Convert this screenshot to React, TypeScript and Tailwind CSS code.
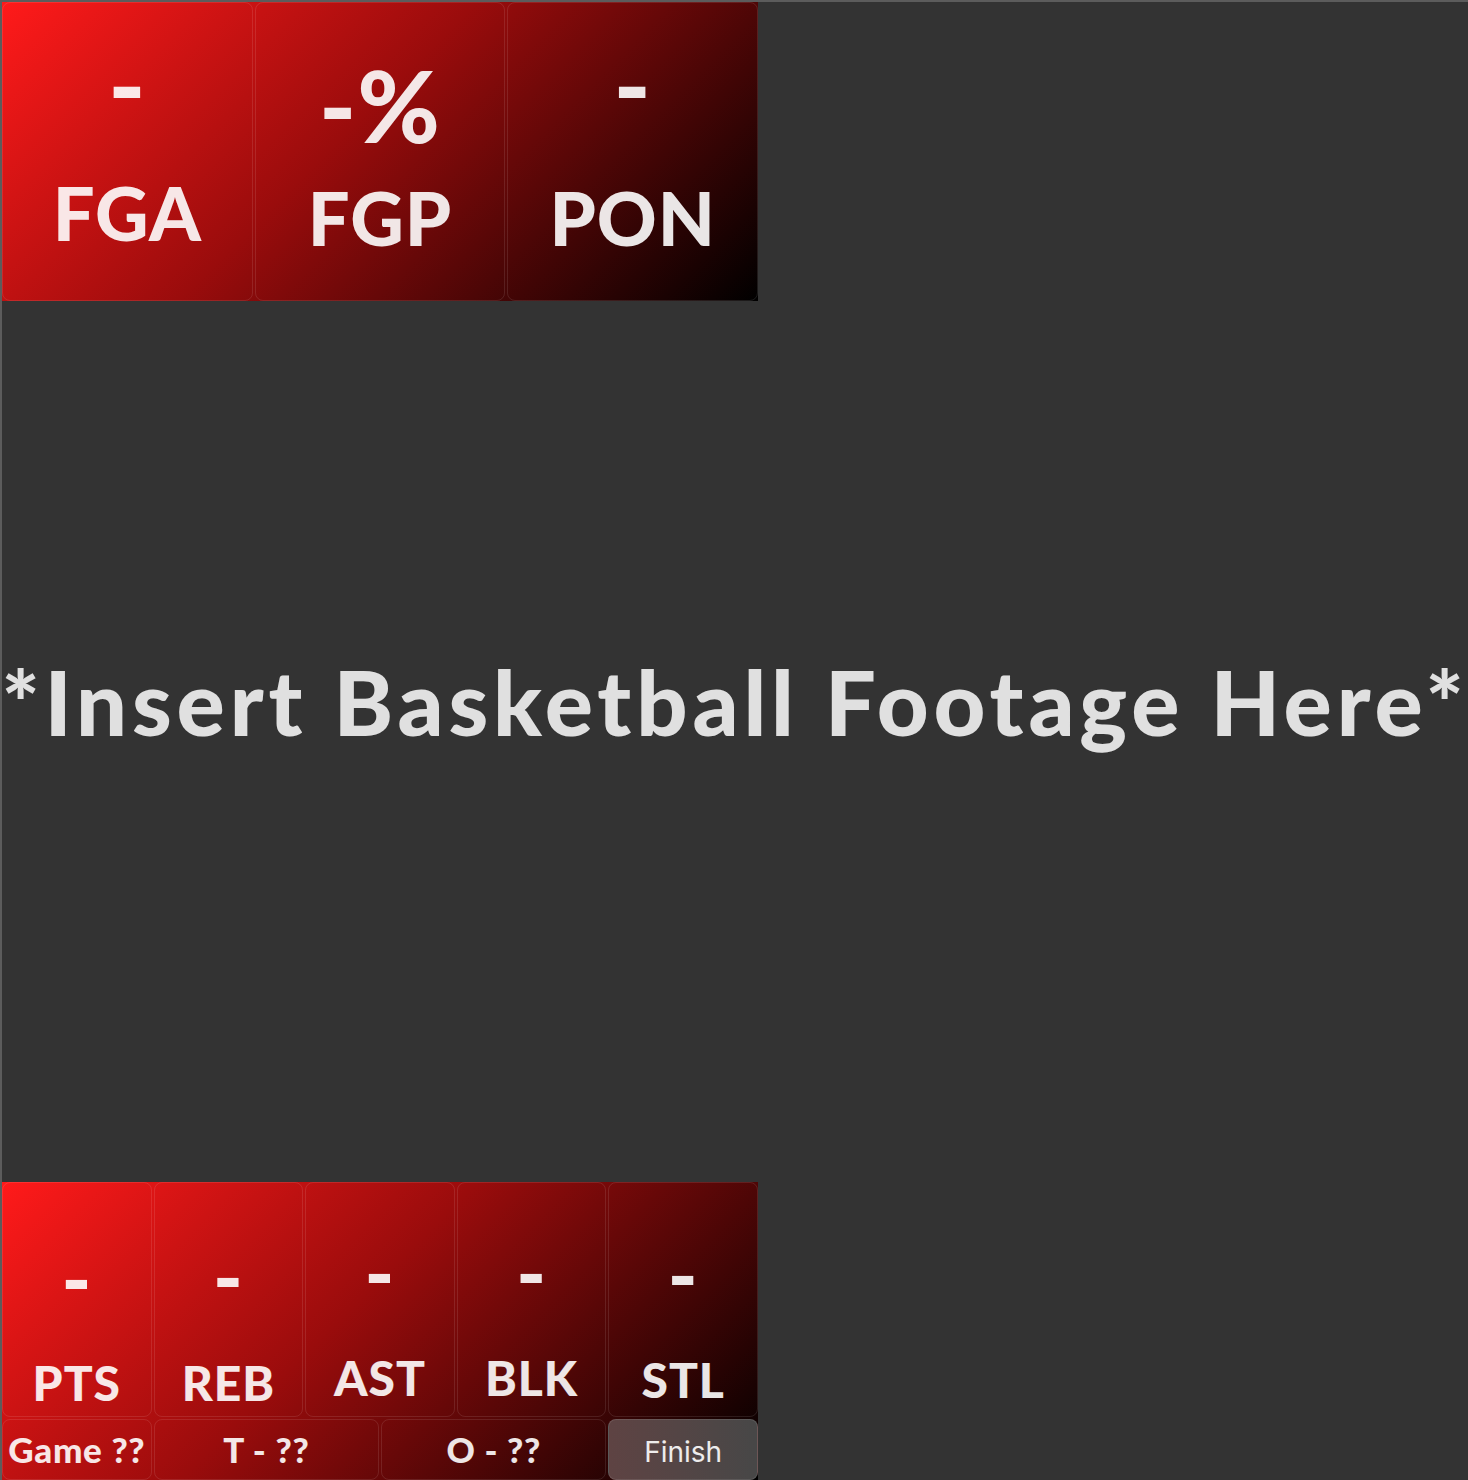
const font = { fontFamily: "Lato, 'Noto Sans', sans-serif" };

type Stat = { value: string; label: string; pad: string; gap: string };

const topStats: Stat[] = [
  { value: "-", label: "FGA", pad: "pt-[30px]", gap: "mt-[43px]" },
  { value: "-%", label: "FGP", pad: "pt-[51px]", gap: "mt-[27px]" },
  { value: "-", label: "PON", pad: "pt-[30px]", gap: "mt-[48px]" },
];

const bottomStats: Stat[] = [
  { value: "-", label: "PTS", pad: "pt-[55px]", gap: "mt-[41px]" },
  { value: "-", label: "REB", pad: "pt-[53px]", gap: "mt-[43px]" },
  { value: "-", label: "AST", pad: "pt-[49px]", gap: "mt-[42px]" },
  { value: "-", label: "BLK", pad: "pt-[49px]", gap: "mt-[42px]" },
  { value: "-", label: "STL", pad: "pt-[51px]", gap: "mt-[42px]" },
];

const panel = "bg-[linear-gradient(135deg,#ff1a1a_0%,#9a0c0c_45%,#000000_100%)]";
const cell = "rounded-lg border border-white/10";

export default function App() {
  return (
    <div
      className="flex h-[1480px] flex-col overflow-hidden border-l-2 border-t-2 border-[#5c5c5c] bg-[#333333] text-white/90"
      style={font}
    >
      {/* shot summary */}
      <div className={`grid h-[299px] w-[756px] shrink-0 grid-cols-3 gap-[2px] ${panel}`}>
        {topStats.map((s) => (
          <div key={s.label} className={`${cell} flex flex-col items-center font-black tracking-[0.06em] ${s.pad}`}>
            <span className="text-[100px] leading-none">{s.value}</span>
            <span className={`text-[74px] leading-none ${s.gap}`}>{s.label}</span>
          </div>
        ))}
      </div>

      <div className="flex flex-1 items-center justify-center pb-[82px]">
        <p className="whitespace-nowrap text-[90px] font-black leading-none tracking-[0.054em] text-[#e0e0e0]">
          *Insert Basketball Footage Here*
        </p>
      </div>

      {/* box score */}
      <div className={`flex h-[298px] w-[756px] shrink-0 flex-col gap-[2px] ${panel}`}>
        <div className="grid h-[235px] grid-cols-5 gap-[2px]">
          {bottomStats.map((s) => (
            <div key={s.label} className={`${cell} flex flex-col items-center font-black tracking-[0.06em] ${s.pad}`}>
              <span className="text-[80px] leading-none">{s.value}</span>
              <span className={`text-[48px] leading-none ${s.gap}`}>{s.label}</span>
            </div>
          ))}
        </div>
        <div className="grid flex-1 grid-cols-10 gap-[2px] font-black tracking-[0.04em]">
          <div className={`${cell} col-span-2 flex items-center justify-center text-[35px]`}>
            Game ??
          </div>
          <div className={`${cell} col-span-3 flex items-center justify-center text-[35px]`}>
            T - ??
          </div>
          <div className={`${cell} col-span-3 flex items-center justify-center text-[35px]`}>
            O - ??
          </div>
          <button
            className={`${cell} col-span-2 flex items-center justify-center bg-gradient-to-r from-[#5e4343] to-[#474747] pt-[4px] text-[28px] font-normal tracking-normal text-white/90`}
            style={{ fontFamily: "Inter, 'Noto Sans', sans-serif" }}
          >
            Finish
          </button>
        </div>
      </div>
    </div>
  );
}
